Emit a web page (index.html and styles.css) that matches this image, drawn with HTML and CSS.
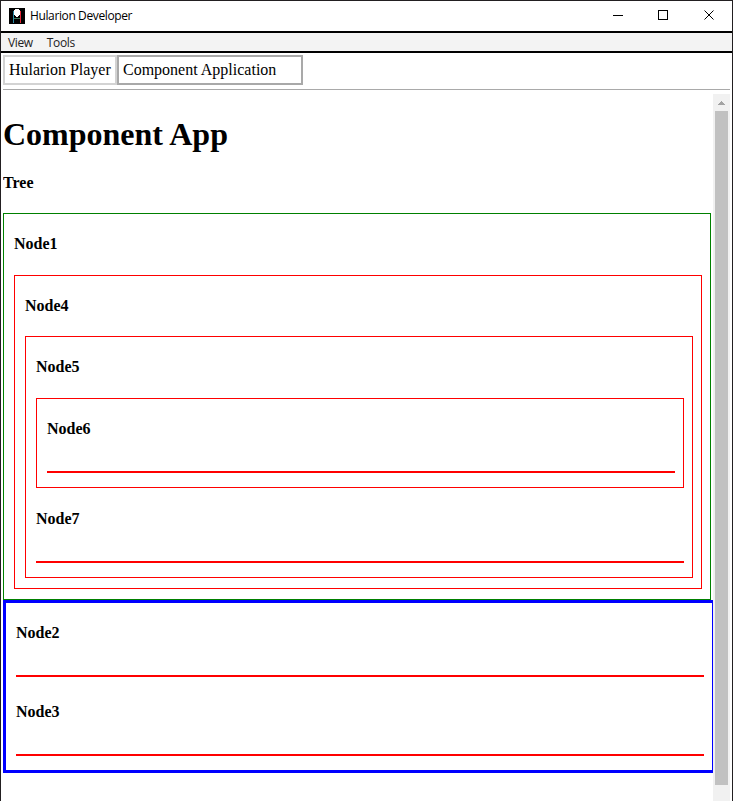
FILE: index.html
```html
<!DOCTYPE html>
<html lang="en">
<head>
<meta charset="utf-8">
<title>Hularion Developer</title>
<link rel="stylesheet" href="styles.css">
</head>
<body>
<div class="window">
  <header class="titlebar">
    <svg class="logo" width="16" height="16" viewBox="0 0 16 16" shape-rendering="crispEdges"><path d="M0 0h16v16H0z" fill="#000"/><path d="M4.500 3v12" stroke="#278ca8"/><path d="M11.500 3v12" stroke="#e52535"/><path d="M5 10.500h6" stroke="#397757"/><path d="M6 1h4v1h1v5h-1v1H9v1H7V8H6V7H5V2h1z" fill="#fff"/></svg>
    <span class="title">Hularion Developer</span>
    <svg class="controls" width="110" height="30" viewBox="0 0 110 30" fill="none" stroke="#000"><path d="M4 14.5h10M49.500 9.500h9v9h-9z" shape-rendering="crispEdges"/><path d="M95.500 9.500l9 9M104.500 9.500l-9 9"/></svg>
  </header>
  <nav class="menu"><span class="menu-item">View</span><span class="menu-item">Tools</span></nav>
  <div class="tabs"><div class="tab">Hularion Player</div><div class="tab active">Component Application</div></div>
  <main class="body">
    <div class="content">
      <h1>Component App</h1>
      <h4 class="tree-label">Tree</h4>
      <section class="node root">
        <h4>Node1</h4>
        <section class="node">
          <h4 class="short">Node4</h4>
          <section class="node">
            <h4>Node5</h4>
            <section class="node leaf-end">
              <h4 class="leaf">Node6</h4>
              <div class="rule"></div>
            </section>
            <h4 class="leaf second">Node7</h4>
            <div class="rule"></div>
            <div class="spacer"></div>
          </section>
        </section>
      </section>
      <section class="selected">
        <h4 class="leaf">Node2</h4>
        <div class="rule"></div>
        <h4 class="leaf third">Node3</h4>
        <div class="rule"></div>
      </section>
    </div>
    <div class="scrollbar">
      <svg class="arrow" width="17" height="17" viewBox="0 0 17 17" shape-rendering="crispEdges"><path d="M8 7h1v1h1v1h1v1h1v1H5v-1h1V9h1V8h1z" fill="#a3a3a3"/></svg>
      <div class="thumb"></div>
    </div>
  </main>
</div>
</body>
</html>
```
FILE: styles.css
```css
* { box-sizing: border-box; }
body { margin: 0; overflow: hidden; background: #fff; color: #000; font: 16px/18px "Liberation Serif", serif; }
.window { height: 801px; border: solid #221f21; border-width: 1px 1px 0; display: flex; flex-direction: column; }
.titlebar { height: 30px; flex: none; display: flex; align-items: center; padding-left: 8px; font: 12px/16px "Open Sans", sans-serif; }
.logo { margin-right: 5px; }
.title { letter-spacing: -.38px; }
.controls { margin-left: auto; margin-right: 13px; }
.menu { height: 22px; flex: none; border: solid #000; border-width: 2px 0; background: #f3f3f3; padding-left: 7px; display: flex; gap: 14px; font: 12px/20px "Open Sans", sans-serif; color: #222; }
.menu-item { letter-spacing: -.35px; }
.tabs { height: 37px; flex: none; margin: 0 2px; padding-top: 2px; border-bottom: 1px solid #a9a9a9; display: flex; }
.tab { width: 114px; height: 30px; border: 2px solid #d3d3d3; padding: 4px; white-space: nowrap; }
.active { width: 186px; border-color: #a9a9a9; }
.body { flex: 1; min-height: 0; margin: 4px 2px 0; display: flex; }
.content { width: 710px; overflow: hidden; }
h1 { margin: 0; padding-top: 22px; height: 80px; font-size: 32px; line-height: 36px; }
h4 { margin: 0; padding-top: 21px; height: 61px; font-size: 16px; line-height: 18px; }
.tree-label { height: 39px; padding-top: 0; }
.short { height: 60px; }
.leaf { height: 72px; }
.second { height: 73px; padding-top: 22px; }
.third { height: 77px; padding-top: 26px; }
.node { border: 1px solid red; padding: 0 8px 10px 10px; }
.root { width: 708px; border-color: green; }
.leaf-end { padding-bottom: 14px; }
.rule { height: 2px; background: red; }
.spacer { height: 4px; }
.selected { width: 710px; border: solid blue; border-width: 3px 1px 3px 3px; padding: 0 8px 14px 10px; }
.scrollbar { width: 17px; background: #f1f1f1; }
.arrow { display: block; }
.thumb { width: 13px; height: 674px; margin-left: 2px; background: #c1c1c1; }
```
